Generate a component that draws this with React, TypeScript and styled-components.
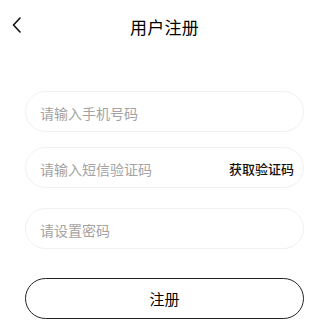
import styled, { createGlobalStyle } from 'styled-components';

const GlobalStyle = createGlobalStyle`
  html, body {
    margin: 0;
    padding: 0;
    background: #ffffff;
    font-family: "Noto Sans CJK SC", "Noto Sans", sans-serif;
  }
`;

const Page = styled.div`
  width: 321px;
  height: 323px;
  background: #fff;
  overflow: hidden;
`;

const Header = styled.header`
  position: relative;
  height: 50px;
  display: flex;
  align-items: center;
  justify-content: center;
  padding-left: 8px;
  box-sizing: border-box;
`;

const BackButton = styled.button`
  position: absolute;
  left: 10px;
  top: 15px;
  width: 14px;
  height: 20px;
  padding: 0;
  border: none;
  background: none;
  display: flex;
  align-items: center;
  justify-content: center;
`;

const Title = styled.h1`
  margin: 2px 0 0;
  font-size: 17px;
  font-weight: 400;
  color: #000;
  letter-spacing: 0.3px;
`;

const Form = styled.form`
  display: flex;
  flex-direction: column;
  width: 279px;
  margin: 41px 0 0 25px;
`;

const Field = styled.div<{ $gap?: number }>`
  height: 41px;
  box-sizing: border-box;
  border: 1px solid #f0f0f0;
  border-radius: 21px;
  display: flex;
  align-items: center;
  padding: 0 9px 0 14px;
  margin-bottom: ${(p) => p.$gap ?? 0}px;
`;

const Input = styled.input`
  flex: 1;
  min-width: 0;
  border: none;
  outline: none;
  background: transparent;
  padding: 0;
  margin-top: 3px;
  font-family: inherit;
  font-size: 14px;
  color: #333;

  &::placeholder {
    color: #a3a3a3;
  }
`;

const CodeLink = styled.span`
  font-size: 13px;
  font-weight: 500;
  color: #111;
  margin-top: 2px;
  white-space: nowrap;
`;

const SubmitButton = styled.button`
  height: 41px;
  box-sizing: border-box;
  border: 1px solid #222;
  border-radius: 21px;
  background: #fff;
  font-family: inherit;
  font-size: 15px;
  font-weight: 400;
  color: #000;
  padding: 0;
`;

function App() {
  return (
    <Page>
      <GlobalStyle />
      <Header>
        <BackButton type='button' aria-label='返回'>
          <svg width='10' height='16' viewBox='0 0 10 16' fill='none'>
            <path d='M8 1 L1.5 8 L8 15' stroke='#111' strokeWidth='1.6' strokeLinecap='round' strokeLinejoin='round' />
          </svg>
        </BackButton>
        <Title>用户注册</Title>
      </Header>

      <Form onSubmit={(e) => e.preventDefault()}>
        <Field $gap={15}>
          <Input placeholder='请输入手机号码' />
        </Field>
        <Field $gap={20}>
          <Input placeholder='请输入短信验证码' />
          <CodeLink>获取验证码</CodeLink>
        </Field>
        <Field $gap={29}>
          <Input type='password' placeholder='请设置密码' />
        </Field>
        <SubmitButton type='submit'>注册</SubmitButton>
      </Form>
    </Page>
  );
}

export default App;
